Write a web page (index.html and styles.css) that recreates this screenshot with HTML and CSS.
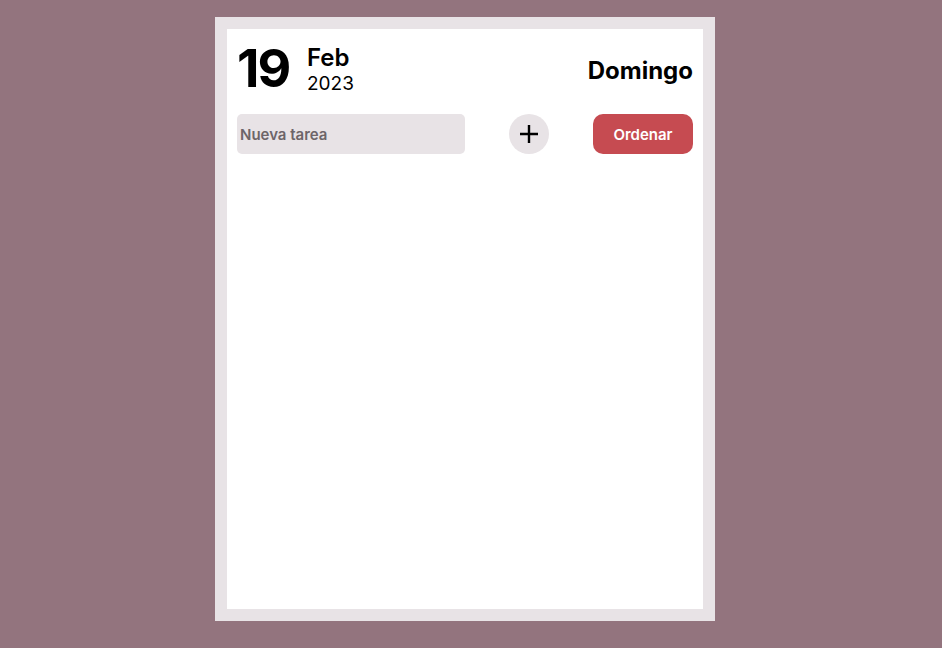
FILE: index.html
```html
<!DOCTYPE html>
<html lang="es">
<head>
<meta charset="utf-8">
<title>Tareas</title>
<link rel="stylesheet" href="styles.css">
</head>
<body>
<main class="card">
  <div class="inner">
    <header class="head">
      <div class="date">
        <span class="day">19</span>
        <div class="my">
          <span class="month">Feb</span>
          <span class="year">2023</span>
        </div>
      </div>
      <span class="weekday">Domingo</span>
    </header>
    <form class="row">
      <input class="task" type="text" placeholder="Nueva tarea">
      <button class="add" type="button" aria-label="Agregar">
        <svg width="22" height="22" viewBox="0 0 22 22"><path d="M11 2v18M2 11h18" stroke="#000" stroke-width="2.4" fill="none"/></svg>
      </button>
      <button class="sort" type="button">Ordenar</button>
    </form>
  </div>
</main>
</body>
</html>
```
FILE: styles.css
```css
html, body { margin: 0; padding: 0; }
body {
  background: #93747e;
  font-family: "Inter", "Roboto", sans-serif;
  height: 648px;
}
.card {
  box-sizing: border-box;
  width: 500px;
  height: 604px;
  margin: 17px 0 0 215px;
  padding: 12px;
  background: #e8e3e6;
}
.inner {
  background: #fff;
  height: 100%;
  box-sizing: border-box;
  padding: 9px 10px 10px;
}
.head {
  display: flex;
  justify-content: space-between;
  align-items: flex-end;
  height: 57px;
}
.date { display: flex; align-items: center; }
.day {
  font-size: 52px;
  font-weight: 700;
  line-height: 52px;
  letter-spacing: -2px;
  width: 70px;
}
.my { display: flex; flex-direction: column; }
.month { font-size: 24px; font-weight: 600; line-height: 31px; }
.year { font-size: 19px; font-weight: 400; line-height: 22px; }
.weekday { font-size: 24px; font-weight: 700; line-height: 30px; margin-bottom: 9px; }
.row {
  display: flex;
  justify-content: space-between;
  margin-top: 19px;
}
.task {
  width: 228px;
  height: 40px;
  box-sizing: border-box;
  border: none;
  border-radius: 5px;
  background: #e8e3e6;
  padding: 0 3px;
  font: 600 15px "Inter", sans-serif;
  outline: none;
}
.task::placeholder { color: #6d6569; }
.add {
  width: 40px;
  height: 40px;
  border-radius: 50%;
  border: none;
  background: #e8e3e6;
  padding: 0;
  display: flex;
  align-items: center;
  justify-content: center;
}
.sort {
  width: 100px;
  height: 40px;
  border: none;
  border-radius: 10px;
  background: #c64b51;
  color: #fff;
  font: 600 15px "Inter", sans-serif;
}
```
